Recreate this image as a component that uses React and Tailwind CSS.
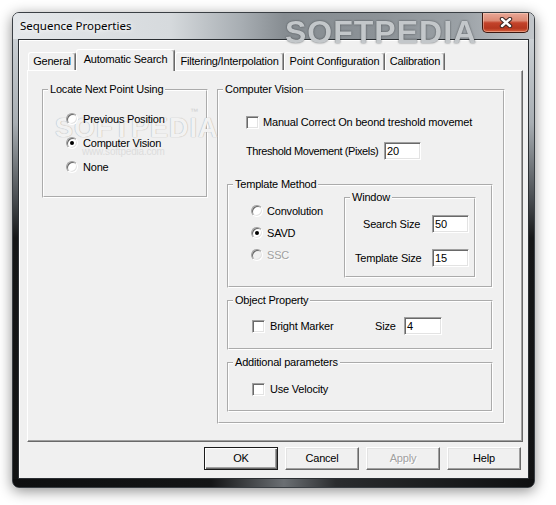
import React from 'react';

// classic 3D edges
const sunken =
  'border border-t-[#a0a0a0] border-l-[#a0a0a0] border-r-white border-b-white shadow-[inset_1px_1px_0_#696969,inset_-1px_-1px_0_#e3e3e3]';

function Edit({ value, w = 'w-[37px]' }) {
  return (
    <div className={`${w} h-[18px] shrink-0 bg-white ${sunken} pl-[2px] flex items-center leading-[14px]`}>
      {value}
    </div>
  );
}

function Check() {
  return <span className={`w-[13px] h-[13px] bg-white shrink-0 ${sunken}`} />;
}

function Radio({ on, off }) {
  return (
    <span
      className={`w-[12px] h-[12px] rounded-full shrink-0 flex items-center justify-center ${off ? 'bg-[#f0f0f0]' : 'bg-white'} ${sunken}`}
    >
      {on && <span className="w-[4px] h-[4px] rounded-full bg-black" />}
    </span>
  );
}

function Group({ label, className, children }) {
  return (
    <fieldset className={`[border:2px_groove_#ffffff] ${className}`}>
      <legend className="ml-[4px] px-[2px] leading-[13px]">{label}</legend>
      {children}
    </fieldset>
  );
}

function Btn({ children, def, off }) {
  return (
    <div
      className={`w-[74px] h-[23px] flex items-center justify-center bg-[#f0f0f0] ${
        def
          ? 'border border-[#1b1b1b] shadow-[inset_1px_1px_0_#fff,inset_-1px_-1px_0_#696969,inset_-2px_-2px_0_#a0a0a0]'
          : 'border border-t-white border-l-white border-r-[#696969] border-b-[#696969] shadow-[inset_-1px_-1px_0_#a0a0a0,inset_1px_1px_0_#e3e3e3]'
      } ${off ? 'text-[#a0a0a0] [text-shadow:1px_1px_0_#fff]' : 'text-black'}`}
    >
      {children}
    </div>
  );
}

const tabs = [
  { label: 'General', w: 'w-[48px]' },
  { label: 'Automatic Search', w: 'w-[99px]', on: true },
  { label: 'Filtering/Interpolation', w: 'w-[109px]' },
  { label: 'Point Configuration', w: 'w-[101px]' },
  { label: 'Calibration', w: 'w-[60px]' },
];

export default function App() {
  return (
    <div className="w-[556px] h-[505px] overflow-hidden bg-white pt-[12px] pl-[12px] font-['Liberation_Sans',Arial,sans-serif] text-[11px] tracking-[-0.2px] text-black">
      {/* window frame */}
      <div className="relative w-[523px] h-[476px] rounded-[7px] border border-[#3a3f44] shadow-[0_3px_14px_rgba(0,0,0,0.45)] bg-[linear-gradient(180deg,#dfe3e6_0px,#c9ced2_30px,#a8aeb3_110px,#4a4e52_185px,#161718_225px,#121314_100%)] flex flex-col overflow-hidden">
        {/* title bar */}
        <div className="relative h-[26px] shrink-0 flex items-start justify-between bg-[linear-gradient(90deg,#e4e7ea_0%,#d6dadd_30%,#a7adb2_44%,#878d92_52%,#8c9297_70%,#9ba1a6_86%,#c2c6ca_100%)]">
          <span className="absolute left-[272px] top-[-5px] text-[32px] font-bold tracking-[1px] text-[#c3c7ca] blur-[0.5px] [text-shadow:0_0_2px_rgba(50,54,58,0.8)] font-['Liberation_Sans',sans-serif]">
            SOFTPEDIA
          </span>
          <div className="relative h-[26px] pl-[7px] flex items-center tracking-normal font-['Noto_Sans',sans-serif] text-[11.5px] [text-shadow:0_0_8px_#fff,0_0_4px_#fff]">
            Sequence Properties
          </div>
          <div className="relative mr-[5px] w-[47px] h-[20px] rounded-b-[5px] border border-t-0 border-[#3d1810] bg-[linear-gradient(180deg,#e9a898_0%,#dc8a74_40%,#c3432a_52%,#b5371f_80%,#d8623f_100%)] shadow-[inset_0_0_0_1px_rgba(255,220,200,0.45)] flex items-center justify-center">
            <svg width="14" height="11" viewBox="0 0 14 11">
              <path d="M3 2 L11 9 M11 2 L3 9" stroke="#3a2623" strokeWidth="4.4" strokeLinecap="round" />
              <path d="M3 2 L11 9 M11 2 L3 9" stroke="#ffffff" strokeWidth="2.4" strokeLinecap="round" />
            </svg>
          </div>
        </div>

        {/* client area */}
        <div className="mx-[5px] h-[440px] shrink-0 border border-[#2b2f33] bg-[#f0f0f0] shadow-[inset_1px_1px_0_#fff] flex flex-col pt-[9px] pl-[8px]">
          {/* tabs */}
          <div className="h-[21px] flex items-end pl-[1px]">
            {tabs.map((t) =>
              t.on ? (
                <div
                  key={t.label}
                  className={`${t.w} h-[22px] -mb-px relative z-10 bg-[#f0f0f0] rounded-t-[3px] border border-b-0 border-t-white border-l-white border-r-[#696969] shadow-[inset_-1px_0_0_#a0a0a0] flex items-center justify-center pb-[3px]`}
                >
                  {t.label}
                </div>
              ) : (
                <div
                  key={t.label}
                  className={`${t.w} h-[18px] rounded-t-[3px] border border-b-0 border-t-white border-l-white border-r-[#696969] shadow-[inset_-1px_0_0_#a0a0a0] flex items-center justify-center`}
                >
                  {t.label}
                </div>
              )
            )}
          </div>

          {/* tab page */}
          <div className="w-[496px] h-[372px] border border-t-white border-l-white border-r-[#696969] border-b-[#696969] shadow-[inset_-1px_-1px_0_#a0a0a0] flex items-start pl-[14px] pt-[12px]">
            <Group label="Locate Next Point Using" className="relative w-[166px] h-[115px]">
              <span className="absolute left-[11px] top-[12px] text-[27px] font-bold tracking-[1px] text-[#f2f2f2] [text-shadow:0_0_1px_#b4b4b4,0_0_1px_#c4c4c4]">
                SOFTPEDIA
              </span>
              <span className="absolute left-[146px] top-[10px] text-[8px] text-[#cfcfcf]">™</span>
              <span className="absolute left-[38px] top-[48px] text-[10px] text-[#dcdcdc]">www.softpedia.com</span>
              <div className="relative pl-[22px] pt-[15px] flex flex-col gap-[8px]">
                <div className="h-[16px] flex items-center gap-[5px]">
                  <Radio />
                  <span>Previous Position</span>
                </div>
                <div className="h-[16px] flex items-center gap-[5px]">
                  <Radio on />
                  <span>Computer Vision</span>
                </div>
                <div className="h-[16px] flex items-center gap-[5px]">
                  <Radio />
                  <span>None</span>
                </div>
              </div>
            </Group>

            <Group label="Computer Vision" className="ml-[9px] w-[288px] h-[341px]">
              <div className="mt-[18px] ml-[27px] h-[16px] flex items-center gap-[4px]">
                <Check />
                <span>Manual Correct On beond treshold movemet</span>
              </div>
              <div className="mt-[12px] ml-[27px] h-[18px] flex items-center">
                <span className="w-[138px] whitespace-nowrap tracking-[-0.4px]">Threshold Movement (Pixels)</span>
                <Edit value="20" />
              </div>

              <Group label="Template Method" className="mt-[18px] ml-[8px] w-[266px] h-[110px]">
                <div className="flex items-start">
                  <div className="w-[115px] pl-[22px] pt-[12px] flex flex-col gap-[6px]">
                    <div className="h-[16px] flex items-center gap-[4px]">
                      <Radio />
                      <span>Convolution</span>
                    </div>
                    <div className="h-[16px] flex items-center gap-[4px]">
                      <Radio on />
                      <span>SAVD</span>
                    </div>
                    <div className="h-[16px] flex items-center gap-[4px]">
                      <Radio off />
                      <span className="text-[#a0a0a0] [text-shadow:1px_1px_0_#fff]">SSC</span>
                    </div>
                  </div>
                  <Group label="Window" className="w-[132px] h-[87px]">
                    <div className="mt-[11px] h-[18px] flex items-center">
                      <span className="ml-[17px] w-[69px]">Search Size</span>
                      <Edit value="50" />
                    </div>
                    <div className="mt-[16px] h-[18px] flex items-center">
                      <span className="ml-[9px] w-[77px]">Template Size</span>
                      <Edit value="15" />
                    </div>
                  </Group>
                </div>
              </Group>

              <Group label="Object Property" className="mt-[6px] ml-[8px] w-[266px] h-[56px]">
                <div className="mt-[10px] h-[18px] flex items-center pl-[23px]">
                  <Check />
                  <span className="ml-[5px] w-[105px]">Bright Marker</span>
                  <span className="w-[29px]">Size</span>
                  <Edit value="4" w="w-[38px]" />
                </div>
              </Group>

              <Group label="Additional parameters" className="mt-[6px] ml-[8px] w-[266px] h-[56px]">
                <div className="mt-[12px] h-[16px] flex items-center pl-[23px]">
                  <Check />
                  <span className="ml-[5px]">Use Velocity</span>
                </div>
              </Group>
            </Group>
          </div>

          {/* dialog buttons */}
          <div className="mt-[5px] w-[496px] pr-[2px] flex justify-end gap-[7px]">
            <Btn def>OK</Btn>
            <Btn>Cancel</Btn>
            <Btn off>Apply</Btn>
            <Btn>Help</Btn>
          </div>
        </div>

        {/* bottom glass edge */}
        <div className="flex-1 bg-[linear-gradient(90deg,#0e0f10_0%,#141516_38%,#6b6f73_52%,#2a2c2e_62%,#0e0f10_100%)]" />
      </div>
    </div>
  );
}
